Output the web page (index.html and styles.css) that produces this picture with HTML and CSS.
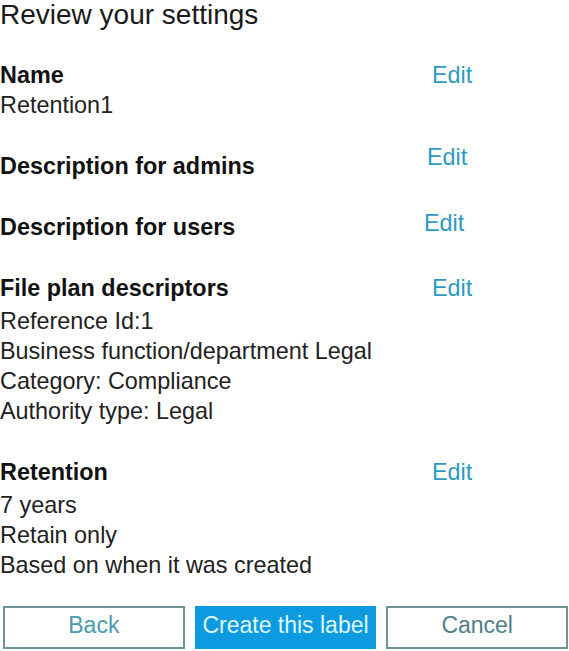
FILE: index.html
```html
<!DOCTYPE html>
<html lang="en">
<head>
  <meta charset="UTF-8">
  <title>Review your settings</title>
  <link rel="stylesheet" href="styles.css">
</head>
<body>

  <div class="review">
    <h1 class="title">Review your settings</h1>

    <div class="section">
      <div class="label">Name</div>
      <a class="edit" href="#">Edit</a>
      <div class="value">Retention1</div>
    </div>

    <div class="section">
      <div class="label">Description for admins</div>
      <a class="edit edit-up" href="#">Edit</a>
    </div>

    <div class="section">
      <div class="label">Description for users</div>
      <a class="edit edit-up-small" href="#">Edit</a>
    </div>

    <div class="section">
      <div class="label">File plan descriptors</div>
      <a class="edit" href="#">Edit</a>
      <div class="value first">Reference Id:1</div>
      <div class="value">Business function/department Legal</div>
      <div class="value">Category: Compliance</div>
      <div class="value">Authority type: Legal</div>
    </div>

    <div class="section last">
      <div class="label">Retention</div>
      <a class="edit" href="#">Edit</a>
      <div class="value first">7 years</div>
      <div class="value">Retain only</div>
      <div class="value">Based on when it was created</div>
    </div>

    <div class="actions">
      <button class="btn btn-back" type="button">Back</button>
      <button class="btn btn-primary" type="submit">Create this label</button>
      <button class="btn btn-cancel" type="button">Cancel</button>
    </div>
  </div>

</body>
</html>
```

FILE: styles.css
```css
body {
  font-family: "Liberation Sans", Arial, sans-serif;
  background-color: #ffffff;
  color: #222;
  margin: 0;
}

.title {
  font-size: 28px;
  line-height: 30px;
  font-weight: normal;
  color: #1a1a1a;
  margin: 0 0 30px;
}

.section {
  display: grid;
  grid-template-columns: 432px 1fr;
  font-size: 23.4px;
  line-height: 30px;
  margin-bottom: 31px;
}

.section.last {
  margin-bottom: 26px;
}

.label {
  font-weight: bold;
  color: #111;
}

.value {
  grid-column: 1 / -1;
}

.value.first {
  margin-top: 3px;
}

.edit {
  color: #2b9bc4;
  text-decoration: none;
  justify-self: start;
}

.edit-up {
  margin: -9px 0 0 -5px;
}

.edit-up-small {
  margin: -4px 0 0 -8px;
}

.actions {
  display: flex;
  gap: 10px;
  padding: 0 1px 0 3px;
}

.btn {
  flex: 1;
  height: 43px;
  font-family: inherit;
  font-size: 23px;
  background: #fff;
  border: 2px solid #6a9496;
  padding: 0 0 4px;
  cursor: pointer;
}

.btn-back {
  color: #4a9cae;
}

.btn-cancel {
  color: #4f8088;
}

.btn-primary {
  background-color: #0c9be0;
  border-color: #0c9be0;
  color: #dff6ff;
}
```
